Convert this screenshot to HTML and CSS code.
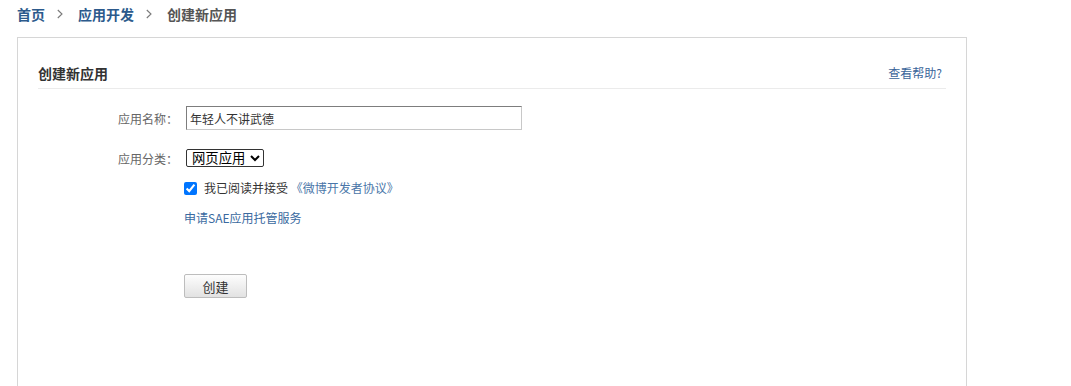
FILE: index.html
```html
<!DOCTYPE html>
<html lang="zh-CN">
<head>
<meta charset="utf-8">
<title>创建新应用</title>
<link rel="stylesheet" href="styles.css">
</head>
<body>
<div class="breadcrumb">
  <a class="crumb-link" href="#">首页</a>
  <span class="crumb-sep"><svg width="6" height="10" viewBox="0 0 6 10"><polyline points="0.8,1 5,5 0.8,9" fill="none" stroke="#7a7a7a" stroke-width="1.1"/></svg></span>
  <a class="crumb-link" href="#">应用开发</a>
  <span class="crumb-sep"><svg width="6" height="10" viewBox="0 0 6 10"><polyline points="0.8,1 5,5 0.8,9" fill="none" stroke="#7a7a7a" stroke-width="1.1"/></svg></span>
  <span class="crumb-current">创建新应用</span>
</div>
<div class="card">
  <div class="card-header">
    <span class="card-title">创建新应用</span>
    <a class="help-link" href="#">查看帮助?</a>
  </div>
  <div class="form">
    <div class="row row-name">
      <label class="label">应用名称：</label>
      <input class="text-input" type="text" value="年轻人不讲武德">
    </div>
    <div class="row row-cat">
      <label class="label">应用分类：</label>
      <select class="select">
        <option>网页应用</option>
      </select>
    </div>
    <div class="row-offset row-agree">
      <input class="checkbox" type="checkbox" checked>
      <span class="agree-text">我已阅读并接受 <a class="agree-link" href="#">《微博开发者协议》</a></span>
    </div>
    <div class="row-offset row-sae">
      <a class="sae-link" href="#">申请SAE应用托管服务</a>
    </div>
    <div class="row-offset row-btn">
      <button class="btn" type="button">创建</button>
    </div>
  </div>
</div>
</body>
</html>
```

FILE: styles.css
```css
html, body {
  overflow: hidden;
}
body {
  margin: 0;
  padding: 0 17px;
  background: #fff;
  font-family: "Noto Sans CJK SC", "Noto Sans", sans-serif;
  font-size: 12px;
  color: #333;
}
a {
  text-decoration: none;
}
.breadcrumb {
  display: flex;
  align-items: center;
  height: 28px;
  line-height: 28px;
  font-size: 14px;
  font-weight: bold;
}
.crumb-link {
  color: #2c5a8c;
}
.crumb-current {
  color: #555;
}
.crumb-sep {
  display: flex;
  align-items: center;
  margin: 0 15px 0 12px;
}
.card {
  margin-top: 9px;
  width: 950px;
  height: 350px;
  box-sizing: border-box;
  border: 1px solid #d6d6d6;
  padding: 25px 20px 0 20px;
}
.card-header {
  display: flex;
  justify-content: space-between;
  align-items: center;
  height: 20px;
  line-height: 20px;
  padding-bottom: 5px;
  border-bottom: 1px solid #ebebeb;
}
.card-title {
  font-size: 14px;
  font-weight: bold;
  color: #333;
}
.help-link {
  font-size: 12px;
  color: #3a659a;
  margin-right: 4px;
}
.row {
  display: flex;
  align-items: center;
}
.label {
  width: 140px;
  margin-right: 8px;
  text-align: right;
  color: #666;
  font-size: 12px;
}
.row-name {
  margin-top: 17px;
}
.text-input {
  box-sizing: border-box;
  width: 336px;
  height: 24px;
  margin: 0;
  padding: 0 3px;
  border: 1px solid;
  border-color: #7d7d7d #c8c8c8 #c8c8c8 #7d7d7d;
  font-family: "Noto Sans CJK SC", sans-serif;
  font-size: 12px;
  color: #333;
  outline: none;
}
.row-cat {
  margin-top: 19px;
  height: 18px;
}
.select {
  box-sizing: border-box;
  height: 18px;
  margin: 0;
  padding: 0 1px;
  font-family: "Liberation Sans", "Noto Sans CJK SC", sans-serif;
  font-size: 13.33px;
  color: #000;
  border: 1px solid #333;
  border-radius: 2px;
  background: #fff;
}
.row-offset {
  padding-left: 146px;
}
.row-agree {
  display: flex;
  align-items: center;
  margin-top: 11px;
  height: 20px;
  line-height: 20px;
}
.checkbox {
  width: 13px;
  height: 13px;
  margin: 0 7px 0 0;
}
.agree-text {
  color: #333;
}
.agree-link {
  color: #4a76a8;
}
.row-sae {
  margin-top: 10px;
  height: 20px;
  line-height: 20px;
}
.sae-link {
  color: #3a6aa0;
}
.row-btn {
  margin-top: 46px;
}
.btn {
  box-sizing: border-box;
  width: 63px;
  height: 24px;
  margin: 0;
  padding: 0;
  border: 1px solid #bdbdbd;
  border-radius: 2px;
  background: linear-gradient(#fdfdfd, #e2e2e2);
  font-family: "Noto Sans CJK SC", sans-serif;
  font-size: 13px;
  color: #333;
  cursor: pointer;
}
```
